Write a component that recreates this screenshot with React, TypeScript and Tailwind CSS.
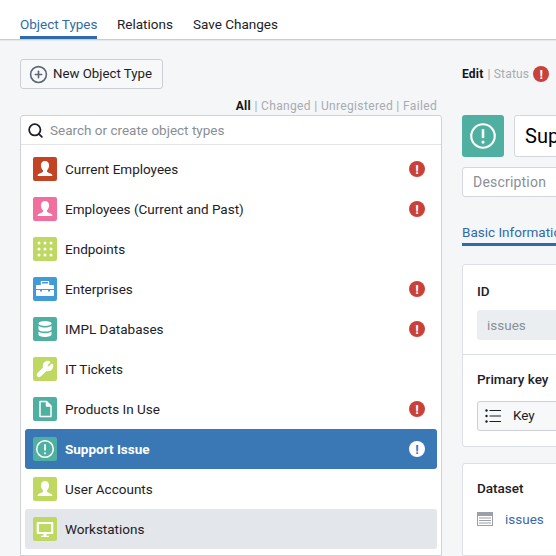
import { CirclePlus, Search, Wrench } from 'lucide-react';
import type { ReactNode } from 'react';

function Person() {
  return (
    <svg viewBox="0 0 24 24" className="h-6 w-6" fill="white">
      <path d="M12 4c-2.700 0-4.100 2-4.100 4.600 0 1.900.8 3.500 1.900 4.600.4.4.4 1.200 0 1.700-.7.8-4 1.400-4.800 2.600-.3.5-.4 1-.4 1.500h14.800c0-.5-.1-1-.4-1.500-.8-1.200-4.100-1.800-4.800-2.600-.4-.5-.4-1.300 0-1.700 1.100-1.100 1.900-2.700 1.900-4.600C16.100 6 14.700 4 12 4z" />
    </svg>
  );
}

function Dots() {
  const spots = [6, 12, 18];
  return (
    <svg viewBox="0 0 24 24" className="h-6 w-6" fill="white">
      {spots.map((y) => spots.map((x) => <circle key={`${x}-${y}`} cx={x} cy={y} r="1.500" />))}
    </svg>
  );
}

function Briefcase() {
  return (
    <svg viewBox="0 0 24 24" className="h-6 w-6" fill="white">
      <path d="M9 6.500h6V5H9zM7.800 8V5c0-.6.5-1 1-1h6.400c.5 0 1 .4 1 1v3H20c.5 0 1 .4 1 1v3H3V9c0-.6.5-1 1-1z" />
      <path d="M3 13h4v1.500h2V13h6v1.500h2V13h4v5c0 .6-.5 1-1 1H4c-.5 0-1-.4-1-1z" />
    </svg>
  );
}

function Database() {
  return (
    <svg viewBox="0 0 24 24" className="h-6 w-6" fill="white">
      <ellipse cx="12" cy="6.500" rx="6.500" ry="2.500" />
      <path d="M5.500 8.800v3.400c0 1.300 2.900 2.400 6.500 2.400s6.500-1.100 6.500-2.400V8.800c-1.200 1.200-3.700 1.800-6.500 1.800s-5.300-.6-6.500-1.800z" />
      <path d="M5.500 14.400v3.100c0 1.400 2.900 2.500 6.500 2.500s6.500-1.100 6.500-2.500v-3.100c-1.200 1.200-3.700 1.800-6.500 1.800s-5.300-.6-6.500-1.800z" />
    </svg>
  );
}

function Doc() {
  return (
    <svg viewBox="0 0 24 24" className="h-6 w-6" fill="none" stroke="white" strokeWidth="1.500" strokeLinejoin="round">
      <path d="M7 4.500h6.500L18 9v10.500H7z" />
      <path d="M13.500 4.500V9H18" fill="white" />
    </svg>
  );
}

function Monitor() {
  return (
    <svg viewBox="0 0 24 24" className="h-6 w-6" fill="white">
      <path d="M4.500 5h15c.4 0 .8.4.8.8v10.400c0 .4-.4.8-.8.8h-15c-.4 0-.8-.4-.8-.8V5.800c0-.4.4-.8.8-.8zm1.500 2v8h12V7z" fillRule="evenodd" />
      <path d="M10.500 17h3v1.800H16V20H8v-1.200h2.500z" />
    </svg>
  );
}

function Issue({ size = 24 }: { size?: number }) {
  return (
    <svg viewBox="0 0 24 24" width={size} height={size} fill="none" stroke="white" strokeWidth="1.500">
      <circle cx="12" cy="12" r="8.300" />
      <path d="M12 7.200v6.300" strokeWidth="1.800" />
      <circle cx="12" cy="16.300" r="1.100" fill="white" stroke="none" />
    </svg>
  );
}

function Warn({ white }: { white?: boolean }) {
  return (
    <span className={`flex h-4 w-4 items-center justify-center rounded-full ${white ? 'bg-white' : 'bg-[#c9413b]'}`}>
      <span className={`text-[13px] leading-none font-bold ${white ? 'text-[#3a77b5]' : 'text-white'}`}>!</span>
    </span>
  );
}

interface ObjectType {
  name: string;
  color: string;
  icon: ReactNode;
  failed?: boolean;
}

const objectTypes: ObjectType[] = [
  { name: 'Current Employees', color: 'bg-[#c24425]', icon: <Person />, failed: true },
  { name: 'Employees (Current and Past)', color: 'bg-[#f06f9f]', icon: <Person />, failed: true },
  { name: 'Endpoints', color: 'bg-[#bed861]', icon: <Dots /> },
  { name: 'Enterprises', color: 'bg-[#429ad9]', icon: <Briefcase />, failed: true },
  { name: 'IMPL Databases', color: 'bg-[#4fb0a1]', icon: <Database />, failed: true },
  { name: 'IT Tickets', color: 'bg-[#bed861]', icon: <Wrench className="h-[18px] w-[18px]" color="white" fill="white" /> },
  { name: 'Products In Use', color: 'bg-[#4fb0a1]', icon: <Doc />, failed: true },
  { name: 'Support Issue', color: 'bg-[#4fb0a1]', icon: <Issue /> },
  { name: 'User Accounts', color: 'bg-[#bed861]', icon: <Person /> },
  { name: 'Workstations', color: 'bg-[#bed861]', icon: <Monitor /> },
];

function ObjectRow({ item }: { item: ObjectType }) {
  const selected = item.name === 'Support Issue';
  const hovered = item.name === 'Workstations';

  return (
    <div
      className={`flex h-10 shrink-0 items-center rounded-[3px] pr-3 pl-2 ${
        selected ? 'bg-[#3a77b5] font-bold text-white' : hovered ? 'bg-[#e3e6ea] text-[#1c2127]' : 'text-[#1c2127]'
      }`}
    >
      <span className={`flex h-6 w-6 shrink-0 items-center justify-center rounded-[2px] ${item.color}`}>{item.icon}</span>
      <span className="ml-2 flex-1">{item.name}</span>
      {(item.failed || selected) && <Warn white={selected} />}
    </div>
  );
}

export default function App() {
  return (
    <div className="flex h-[556px] w-[556px] flex-col overflow-hidden bg-[#f5f6f8] font-['Roboto',sans-serif] text-[13.5px]">
      <div className="flex h-10 shrink-0 gap-5 border-b border-[#c9cdd2] bg-white px-5 pt-4 shadow-[0_1px_1px_rgba(0,0,0,0.05)]">
        <div className="h-[23px] w-[77px] border-b-[3px] border-[#2f6ba8] leading-4 whitespace-nowrap text-[#2f6ba8]">Object Types</div>
        <div className="leading-4 text-[#1c2127]">Relations</div>
        <div className="leading-4 text-[#1c2127]">Save Changes</div>
      </div>

      <div className="flex min-h-0 flex-1 gap-5 pl-5">
        <div className="flex w-[422px] shrink-0 flex-col pt-[19px]">
          <button className="flex h-[30px] w-[143px] items-center gap-[5px] rounded-[3px] border border-[#ccd0d5] bg-[#f7f8f9] pl-2 text-[13.25px] text-[#1c2127]">
            <CirclePlus className="h-[19px] w-[19px] text-[#5c6773]" />
            New Object Type
          </button>

          <div className="mt-[5px] h-[21px] pr-[5px] text-right text-[12px] leading-[24px] tracking-[0.35px] text-[#a7abb1]">
            <span className="font-bold text-[#111418]">All</span> | Changed | Unregistered | Failed
          </div>

          <div className="flex min-h-0 flex-1 flex-col rounded-t-[3px] border border-[#cfd2d6] bg-white">
            <div className="flex h-[29px] shrink-0 items-center gap-1.5 border-b border-[#e3e5e8] pl-1.5 text-[#8a8f96]">
              <Search className="h-[17px] w-[17px] text-[#1c2127]" strokeWidth={2.5} />
              Search or create object types
            </div>
            <div className="flex flex-col overflow-hidden px-1 pt-1">
              {objectTypes.map((item) => (
                <ObjectRow key={item.name} item={item} />
              ))}
            </div>
          </div>
        </div>

        <div className="w-[300px] shrink-0 pt-[26px]">
          <div className="flex h-4 items-center gap-1 text-[12px] tracking-[0.2px] text-[#a7abb1]">
            <span className="font-bold text-[#111418]">Edit</span> | Status <Warn />
          </div>

          <div className="mt-[33px] flex gap-2.5">
            <span className="flex h-[42px] w-[42px] items-center justify-center rounded-[3px] bg-[#4fb0a1]">
              <Issue size={34} />
            </span>
            <div className="flex h-[42px] flex-1 items-center rounded-[3px] border border-[#d4d7db] bg-white pl-2.5 text-[20px] text-black">
              Support Issue
            </div>
          </div>

          <div className="mt-2.5 flex h-[30px] items-center rounded-[3px] border border-[#d4d7db] bg-white pl-2.5 text-[14px] tracking-[0.2px] text-[#8a8f96]">
            Description
          </div>

          <div className="mt-[27px] h-[22px] w-[150px] border-b-[3px] border-[#2f6ba8] leading-4 whitespace-nowrap text-[#2f6ba8]">
            Basic Information
          </div>

          <div className="mt-[18px] rounded-[3px] border border-[#dcdfe3] bg-white">
            <div className="border-b border-[#dcdfe3] px-3.5 pt-[16px] pb-[14px]">
              <div className="font-medium text-[#1c2127]">ID</div>
              <div className="mt-[9px] flex h-[30px] items-center rounded-[3px] bg-[#ebeef1] pl-2.5 text-[#8a8f96]">issues</div>
            </div>
            <div className="px-3.5 pt-[14px] pb-[15px]">
              <div className="font-medium text-[#1c2127]">Primary key</div>
              <div className="mt-[11px] flex h-[30px] items-center gap-3 rounded-[3px] border border-[#ccd0d5] bg-[#f7f8f9] pl-[7px] text-[#1c2127]">
                <svg viewBox="0 0 16 16" className="h-4 w-4" fill="none" stroke="#1c2127" strokeWidth="1.200">
                  <path d="M4.500 2.500H16M4.500 8H16M4.500 13.500H16" />
                  <circle cx="1.500" cy="2.500" r="1.200" fill="#1c2127" stroke="none" />
                  <circle cx="1.500" cy="8" r="1.200" fill="#1c2127" stroke="none" />
                  <circle cx="1.500" cy="13.500" r="1.200" fill="#1c2127" stroke="none" />
                </svg>
                Key
              </div>
            </div>
          </div>

          <div className="mt-4 rounded-[3px] border border-[#dcdfe3] bg-white">
            <div className="border-b border-[#dcdfe3] px-3.5 pt-[14px] pb-[26px]">
              <div className="font-medium text-[#1c2127]">Dataset</div>
              <div className="mt-[11px] flex items-center gap-3 text-[#3f66ad]">
                <svg viewBox="0 0 16 16" className="h-4 w-4" fill="none" stroke="#9aa0a6">
                  <rect x="0.500" y="1.500" width="15" height="13" />
                  <path d="M1 2h14v2.500H1z" fill="#9aa0a6" />
                  <path d="M2 7h12M2 9.500h12M2 12h12" />
                </svg>
                issues
              </div>
            </div>
          </div>
        </div>
      </div>
    </div>
  );
}
